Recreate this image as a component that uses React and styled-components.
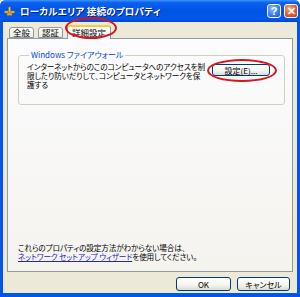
import React from 'react';
import styled, { createGlobalStyle } from 'styled-components';

const GlobalStyle = createGlobalStyle`
  html, body {
    margin: 0;
    padding: 0;
    background: #ffffff;
  }
  * {
    box-sizing: border-box;
  }
`;

const JP = `"Noto Sans CJK JP", "Liberation Sans", sans-serif`;

const Window = styled.div`
  width: 300px;
  height: 297px;
  display: flex;
  flex-direction: column;
  background: #0055ea;
  border-radius: 6px 6px 0 0;
  overflow: hidden;
  font-family: ${JP};
  font-feature-settings: "palt";
`;

const TitleBar = styled.div`
  height: 22px;
  flex: none;
  display: flex;
  align-items: center;
  padding: 0 2px 0 4px;
  background: linear-gradient(#3d95ff 0%, #0a61f0 12%, #0054e3 45%, #0058ea 85%, #0047d0 100%);
`;

const TitleText = styled.span`
  flex: 1;
  margin-left: 5px;
  color: #ffffff;
  font-size: 9.5px;
  font-weight: bold;
  letter-spacing: 0.2px;
  text-shadow: 1px 1px 0 #0a1f8a;
  white-space: nowrap;
`;

const CaptionButton = styled.div`
  width: 14px;
  height: 14px;
  margin-left: 3px;
  border: 1px solid #ffffff;
  border-radius: 3px;
  display: flex;
  align-items: center;
  justify-content: center;
  color: #ffffff;
  font-family: "Liberation Sans", sans-serif;
  font-weight: bold;
  font-size: 11px;
  background: ${(p) =>
    p.close
      ? 'radial-gradient(circle at 35% 30%, #f4a58a 0%, #e35a2e 55%, #c63b12 100%)'
      : 'radial-gradient(circle at 35% 30%, #8fb8ff 0%, #3c7df0 55%, #2456d4 100%)'};
`;

const Body = styled.div`
  flex: 1;
  display: flex;
  flex-direction: column;
  margin: 0 3px 4px 3px;
  padding: 3px 4px 2px 4px;
  background: #ece9d8;
`;

const TabRow = styled.div`
  display: flex;
  align-items: flex-end;
  height: 13px;
  padding-left: 2px;
  position: relative;
  z-index: 1;
`;

const Tab = styled.div`
  width: ${(p) => p.w}px;
  height: ${(p) => (p.active ? '14px' : '11px')};
  margin-bottom: ${(p) => (p.active ? '-1px' : '0')};
  margin-right: ${(p) => (p.active ? '0' : '4px')};
  border: 1px solid #919b9c;
  border-bottom: ${(p) => (p.active ? 'none' : '1px solid #919b9c')};
  border-top: ${(p) => (p.active ? '2px solid #ffc83c' : '1px solid #919b9c')};
  border-radius: 3px 3px 0 0;
  background: ${(p) => (p.active ? '#fcfcfe' : 'linear-gradient(#ffffff, #ecebe5)')};
  font-size: 8.5px;
  line-height: ${(p) => (p.active ? '11px' : '9px')};
  text-align: center;
  color: #000000;
  white-space: nowrap;
`;

const Panel = styled.div`
  flex: 1;
  display: flex;
  flex-direction: column;
  border: 1px solid #919b9c;
  background: linear-gradient(#fcfcfe, #f4f3ee);
  padding: 11px 7px 10px 10px;
`;

const Group = styled.fieldset`
  margin: 0;
  height: 55px;
  padding: 2px 9px 0 8px;
  border: 1px solid #d0d0bf;
  border-radius: 3px;
  display: flex;
  align-items: flex-start;
  gap: 12px;
`;

const Legend = styled.legend`
  padding: 0 2px;
  margin-left: 2px;
  color: #0046d5;
  font-size: 8px;
  line-height: 10px;
`;

const Text = styled.p`
  margin: 0;
  font-size: 7.6px;
  line-height: 9px;
  letter-spacing: -0.1px;
  color: #000000;
  white-space: nowrap;
`;

const Desc = styled(Text)`
  width: 173px;
`;

const XPButton = styled.div`
  position: relative;
  width: ${(p) => p.w || 55}px;
  height: ${(p) => p.h || 14}px;
  margin-top: ${(p) => p.mt || 0}px;
  flex: none;
  border: 1px solid #003c74;
  border-radius: 3px;
  background: linear-gradient(#ffffff 0%, #f4f4f0 60%, #dcdad0 100%);
  display: flex;
  align-items: center;
  justify-content: center;
  font-size: 8px;
  color: #000000;
  white-space: nowrap;
`;

const Spacer = styled.div`
  flex: 1;
`;

const Link = styled.span`
  color: #2424c8;
  text-decoration: underline;
`;

const ButtonRow = styled.div`
  display: flex;
  justify-content: flex-end;
  gap: 6px;
  padding: 5px 3px 0 0;
`;

const Annotation = styled.div`
  position: absolute;
  border: 2px solid #d8141c;
  border-radius: 50%;
  pointer-events: none;
  left: ${(p) => p.l}px;
  top: ${(p) => p.t}px;
  width: ${(p) => p.w}px;
  height: ${(p) => p.h}px;
`;

const TabWrap = styled.div`
  position: relative;
`;

const NetIcon = () => (
  <svg width="11" height="11" viewBox="0 0 11 11">
    <rect x="0.5" y="5" width="10" height="2" fill="#f0d070" stroke="#8a6a20" strokeWidth="0.6" />
    <rect x="4.5" y="1" width="2" height="5" fill="#f0d070" stroke="#8a6a20" strokeWidth="0.6" />
    <rect x="3" y="7" width="5" height="2.5" fill="#d8b050" stroke="#8a6a20" strokeWidth="0.6" />
  </svg>
);

export default function App() {
  return (
    <>
      <GlobalStyle />
      <Window>
        <TitleBar>
          <NetIcon />
          <TitleText>ローカルエリア 接続のプロパティ</TitleText>
          <CaptionButton>?</CaptionButton>
          <CaptionButton close>✕</CaptionButton>
        </TitleBar>
        <Body>
          <TabRow>
            <Tab w={25}>全般</Tab>
            <Tab w={25}>認証</Tab>
            <TabWrap>
              <Tab active w={44}>詳細設定</Tab>
              <Annotation l={-2} t={-8} w={52} h={22} />
            </TabWrap>
          </TabRow>
          <Panel>
            <Group>
              <Legend>Windows ファイアウォール</Legend>
              <Desc>
                インターネットからのこのコンピュータへのアクセスを制
                <br />
                限したり防いだりして、コンピュータとネットワークを保
                <br />
                護する
              </Desc>
              <XPButton w={58} h={12} mt={2}>
                設定(E)...
                <Annotation l={-6} t={-6} w={70} h={23} />
              </XPButton>
            </Group>
            <Spacer />
            <Text>これらのプロパティの設定方法がわからない場合は、</Text>
            <Text>
              <Link>ネットワーク セットアップ ウィザード</Link>を使用してください。
            </Text>
          </Panel>
          <ButtonRow>
            <XPButton w={55}>OK</XPButton>
            <XPButton w={53}>キャンセル</XPButton>
          </ButtonRow>
        </Body>
      </Window>
    </>
  );
}
